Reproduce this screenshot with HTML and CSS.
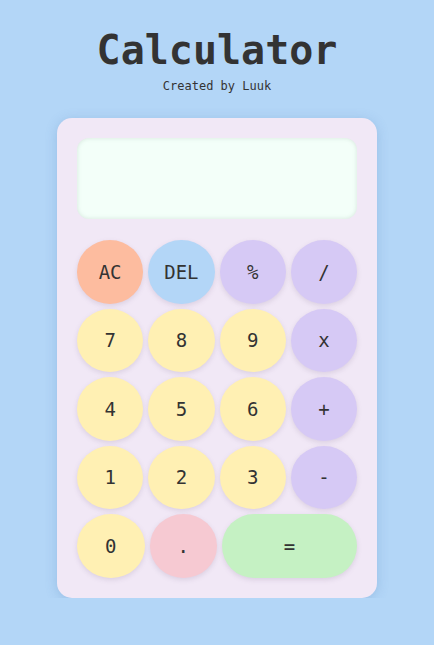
FILE: index.html
```html
<!DOCTYPE html>
<html lang="en">
<head>
<meta charset="utf-8">
<title>Calculator</title>
<link rel="stylesheet" href="styles.css">
</head>
<body>
  <header class="header">
    <h1 class="title">Calculator</h1>
    <p class="subtitle">Created by Luuk</p>
  </header>
  <main class="calculator">
    <div class="display"></div>
    <div class="keys">
      <div class="row">
        <button class="key key-clear">AC</button>
        <button class="key key-del">DEL</button>
        <button class="key key-op">%</button>
        <button class="key key-op">/</button>
      </div>
      <div class="row">
        <button class="key key-num">7</button>
        <button class="key key-num">8</button>
        <button class="key key-num">9</button>
        <button class="key key-op">x</button>
      </div>
      <div class="row">
        <button class="key key-num">4</button>
        <button class="key key-num">5</button>
        <button class="key key-num">6</button>
        <button class="key key-op">+</button>
      </div>
      <div class="row">
        <button class="key key-num">1</button>
        <button class="key key-num">2</button>
        <button class="key key-num">3</button>
        <button class="key key-op">-</button>
      </div>
      <div class="row">
        <button class="key key-num">0</button>
        <button class="key key-dot">.</button>
        <button class="key key-eq">=</button>
      </div>
    </div>
  </main>
</body>
</html>
```
FILE: styles.css
```css
* { box-sizing: border-box; }

body {
  margin: 0;
  background: #b3d6f7;
  font-family: "DejaVu Sans Mono", "Liberation Mono", monospace;
  color: #333333;
}

.header {
  text-align: center;
}

.title {
  margin: 26px 0 0;
  font-size: 40px;
  line-height: 48px;
  font-weight: bold;
  color: #333333;
}

.subtitle {
  margin: 5px 0 0;
  font-size: 12px;
  line-height: 14px;
  color: #333333;
}

.calculator {
  width: 320px;
  margin: 25px auto 0;
  padding: 20px;
  background: #f1e8f6;
  border-radius: 15px;
  box-shadow: 0 2px 12px rgba(70, 120, 180, 0.25);
}

.display {
  height: 81px;
  background: #f3fff9;
  border-radius: 12px;
  box-shadow: inset 0 0 4px rgba(120, 150, 130, 0.25);
}

.keys {
  margin-top: 21px;
  display: flex;
  flex-direction: column;
  gap: 5px;
}

.row {
  display: flex;
  gap: 5px;
}

.key {
  flex: 1;
  height: 63.5px;
  border: none;
  border-radius: 50%;
  font-family: "DejaVu Sans Mono", "Liberation Mono", monospace;
  font-size: 19px;
  color: #333333;
  padding: 0;
  box-shadow: 0 2px 5px rgba(120, 100, 140, 0.18);
}

.key-clear { background: #fdbc9f; }
.key-del { background: #b3d6f7; }
.key-op { background: #d6c9f5; }
.key-num { background: #fff0b3; }
.key-dot { background: #f6c9d2; }
.key-eq {
  flex: 2;
  background: #c5f1c3;
  border-radius: 32px;
}
```
